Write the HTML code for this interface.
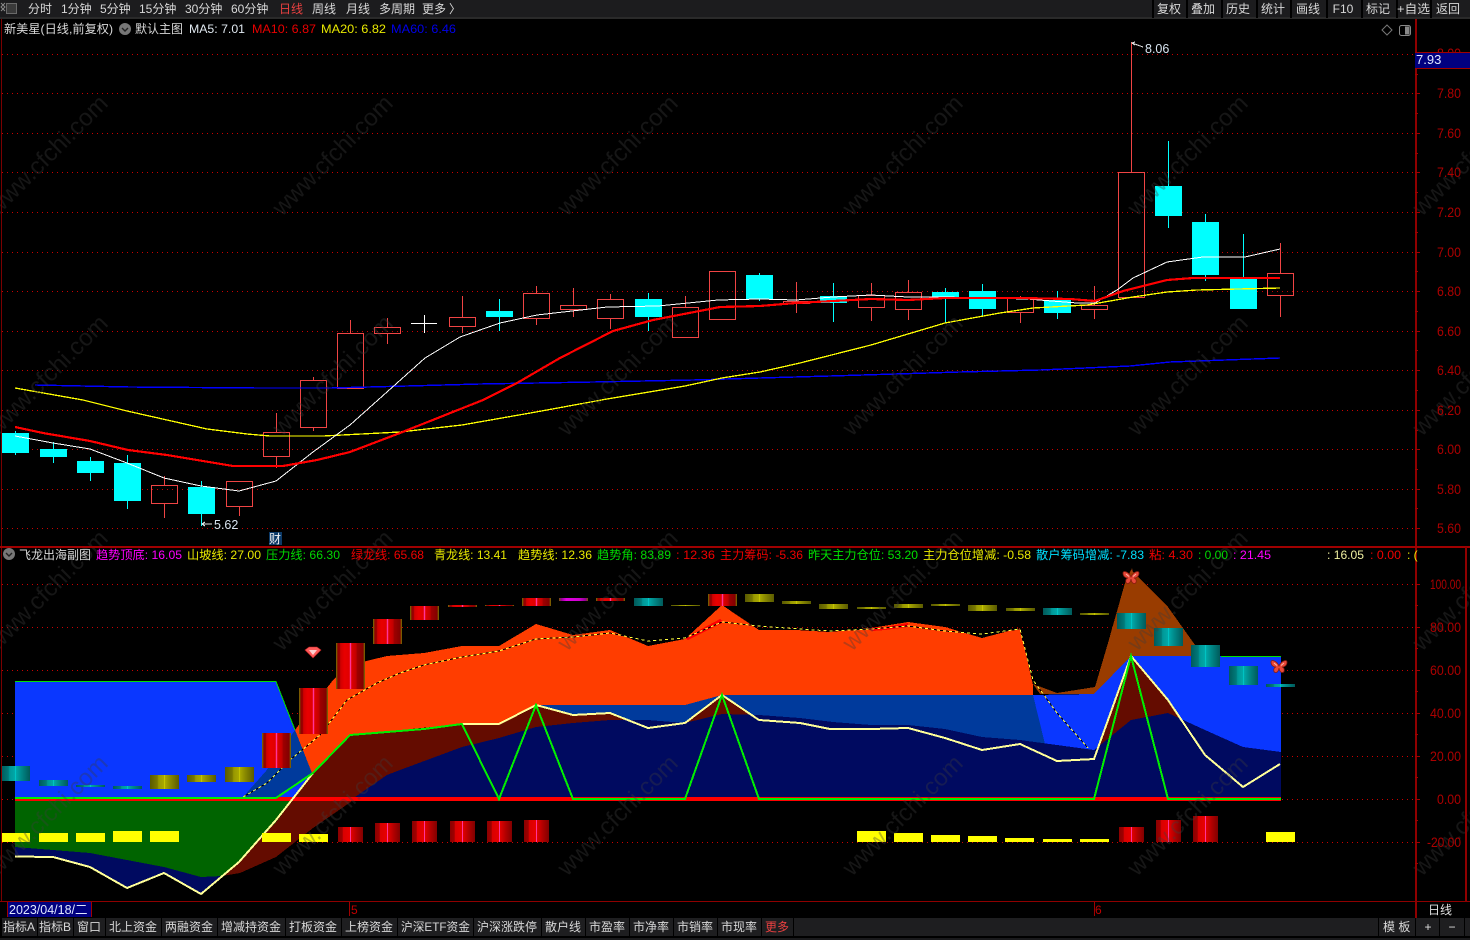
<!DOCTYPE html>
<html lang="zh-CN">
<head>
<meta charset="utf-8">
<title>新美星 日线</title>
<style>
html,body{margin:0;padding:0;background:#000;width:1470px;height:940px;overflow:hidden}
svg{display:block}
text{font-family:"Liberation Sans","Noto Sans CJK SC",sans-serif;font-size:12px;white-space:pre}
.t{fill:#d8d8d8}
.ax{fill:#ac0000;font-size:14px}
.wm{fill:rgba(60,60,60,.36);font-size:24px}
.c{text-anchor:middle}
</style>
</head>
<body>
<svg width="1470" height="940" viewBox="0 0 1470 940" xmlns="http://www.w3.org/2000/svg" shape-rendering="crispEdges">
<defs>
<linearGradient id="gr"><stop offset="0" stop-color="#7a5a00"/><stop offset=".04" stop-color="#7a5a00"/><stop offset=".05" stop-color="#8b0000"/><stop offset=".14" stop-color="#a00000"/><stop offset=".15" stop-color="#d00000"/><stop offset=".3" stop-color="#e80000"/><stop offset=".47" stop-color="#e00000"/><stop offset=".48" stop-color="#ff3399"/><stop offset=".52" stop-color="#ff3399"/><stop offset=".53" stop-color="#e00000"/><stop offset=".7" stop-color="#c00000"/><stop offset=".72" stop-color="#a00000"/><stop offset=".95" stop-color="#800000"/><stop offset=".96" stop-color="#7a5a00"/><stop offset="1" stop-color="#7a5a00"/></linearGradient>
<linearGradient id="gb"><stop offset="0" stop-color="#8b0000"/><stop offset=".18" stop-color="#a00000"/><stop offset=".2" stop-color="#d80000"/><stop offset=".47" stop-color="#e80000"/><stop offset=".48" stop-color="#ff3399"/><stop offset=".52" stop-color="#ff3399"/><stop offset=".53" stop-color="#e00000"/><stop offset=".75" stop-color="#b00000"/><stop offset="1" stop-color="#800000"/></linearGradient>
<linearGradient id="gt"><stop offset="0" stop-color="#005a5a"/><stop offset=".25" stop-color="#007a7a"/><stop offset=".3" stop-color="#009898"/><stop offset=".48" stop-color="#00a8a8"/><stop offset=".5" stop-color="#00d8d8"/><stop offset=".52" stop-color="#00a8a8"/><stop offset=".7" stop-color="#008888"/><stop offset="1" stop-color="#005a5a"/></linearGradient>
<linearGradient id="go"><stop offset="0" stop-color="#5a5a00"/><stop offset=".25" stop-color="#787800"/><stop offset=".3" stop-color="#989800"/><stop offset=".48" stop-color="#a8a800"/><stop offset=".5" stop-color="#d8d800"/><stop offset=".52" stop-color="#a8a800"/><stop offset=".7" stop-color="#888800"/><stop offset="1" stop-color="#5a5a00"/></linearGradient>
<linearGradient id="gm"><stop offset="0" stop-color="#7a5a00"/><stop offset=".08" stop-color="#900090"/><stop offset=".25" stop-color="#e000e0"/><stop offset=".7" stop-color="#d000d0"/><stop offset=".92" stop-color="#900090"/><stop offset="1" stop-color="#7a5a00"/></linearGradient>
</defs>

<rect width="1470" height="940" fill="#000"/>

<!-- top bar -->
<rect x="0" y="0" width="1470" height="18" fill="#1c1c1e"/>
<rect x="0" y="17" width="1470" height="2" fill="#2a2a2a"/>
<g fill="#000"><rect x="1152" y="0" width="2" height="18"/><rect x="1186" y="0" width="2" height="18"/><rect x="1221" y="0" width="2" height="18"/><rect x="1256" y="0" width="2" height="18"/><rect x="1290" y="0" width="2" height="18"/><rect x="1326" y="0" width="2" height="18"/><rect x="1361" y="0" width="2" height="18"/><rect x="1396" y="0" width="2" height="18"/><rect x="1430" y="0" width="2" height="18"/></g>
<path d="M1 3 L5 7 L1 11 M5 3 L1 7 L5 11" fill="none" stroke="#8a8a8a" stroke-width="1" shape-rendering="geometricPrecision"/>
<rect x="6.5" y="3.5" width="10" height="10" fill="#3a3a3a" stroke="#6a6a6a"/>
<g class="t">
<text x="28" y="13">分时</text><text x="61" y="13">1分钟</text><text x="100" y="13">5分钟</text><text x="139" y="13">15分钟</text><text x="185" y="13">30分钟</text><text x="231" y="13">60分钟</text>
<text x="279" y="13" style="fill:#e84040">日线</text><text x="312" y="13">周线</text><text x="346" y="13">月线</text><text x="379" y="13">多周期</text><text x="422" y="13">更多</text><text x="449" y="13">〉</text>
<text x="1169" y="13" class="c">复权</text><text x="1203" y="13" class="c">叠加</text><text x="1238" y="13" class="c">历史</text><text x="1273" y="13" class="c">统计</text><text x="1308" y="13" class="c">画线</text><text x="1343" y="13" class="c">F10</text><text x="1378" y="13" class="c">标记</text><text x="1397" y="13" textLength="33" lengthAdjust="spacingAndGlyphs">+自选</text><text x="1448" y="13" class="c">返回</text>
</g>

<!-- grid -->
<g stroke="#cc0000" stroke-width="1" stroke-dasharray="1 4" fill="none">
<path d="M2 54.5H1415M2 93.5H1415M2 133.5H1415M2 172.5H1415M2 212.5H1415M2 252.5H1415M2 291.5H1415M2 331.5H1415M2 370.5H1415M2 410.5H1415M2 449.5H1415M2 489.5H1415M2 528.5H1415"/>
<path d="M2 584.5H1415M2 627.5H1415M2 670.5H1415M2 713.5H1415M2 756.5H1415M2 799.5H1415M2 842.5H1415"/>
</g>

<!-- candles -->
<g fill="#00ffff" stroke="none">
<rect x="2" y="433" width="27" height="20"/><rect x="40" y="449" width="27" height="8"/><rect x="77" y="461" width="27" height="12"/><rect x="114" y="463" width="27" height="38"/><rect x="188" y="487" width="27" height="27"/><rect x="486" y="311" width="27" height="6"/><rect x="635" y="299" width="27" height="18"/><rect x="746" y="275" width="27" height="24"/><rect x="820" y="296" width="27" height="7"/><rect x="932" y="292" width="27" height="6"/><rect x="969" y="291" width="27" height="18"/><rect x="1044" y="300" width="27" height="13"/><rect x="1155" y="186" width="27" height="30"/><rect x="1192" y="222" width="27" height="53"/><rect x="1230" y="279" width="27" height="30"/>
</g>
<path fill="none" stroke="#00ffff" stroke-width="1" d="M15.5 431V455M53.5 442V463M90.5 457V481M127.5 455V509M201.5 481V526M499.5 299V331M648.5 293V331M759.5 273V301M833.5 283V322M945.5 288V323M982.5 284V316M1057.5 291V319M1168.5 141V228M1205.5 214V281M1243.5 234V309"/>
<path fill="none" stroke="#f04444" stroke-width="1" d="
M164.5 476V485.5M164.5 503.5V518M151.5 485.5H177.5V503.5H151.5Z
M239.5 506.5V516M226.5 481.5H252.5V506.5H226.5Z
M276.5 413V432.5M276.5 456.5V468M263.5 432.5H289.5V456.5H263.5Z
M313.5 377V380.5M313.5 427.5V431M300.5 380.5H326.5V427.5H300.5Z
M350.5 320V333.5M337.5 333.5H363.5V388.5H337.5Z
M387.5 318V327.5M387.5 333.5V344M374.5 327.5H400.5V333.5H374.5Z
M462.5 296V317.5M462.5 326.5V333M449.5 317.5H475.5V326.5H449.5Z
M536.5 286V293.5M536.5 318.5V325M523.5 293.5H549.5V318.5H523.5Z
M573.5 288V305.5M573.5 309.5V317M560.5 305.5H586.5V309.5H560.5Z
M610.5 294V299.5M610.5 318.5V329M597.5 299.5H623.5V318.5H597.5Z
M685.5 296V307.5M672.5 307.5H698.5V337.5H672.5Z
M709.5 271.5H735.5V319.5H709.5Z
M796.5 282V301.5M796.5 303.5V313M783.5 301.5H809.5V303.5H783.5Z
M871.5 283V295.5M871.5 307.5V321M858.5 295.5H884.5V307.5H858.5Z
M908.5 280V292.5M908.5 309.5V320M895.5 292.5H921.5V309.5H895.5Z
M1020.5 296V298.5M1020.5 312.5V323M1007.5 298.5H1033.5V312.5H1007.5Z
M1094.5 286V305.5M1094.5 309.5V319M1081.5 305.5H1107.5V309.5H1081.5Z
M1131.5 42V172.5M1118.5 172.5H1144.5V297.5H1118.5Z
M1280.5 243V273.5M1280.5 295.5V317M1267.5 273.5H1293.5V295.5H1267.5Z"/>
<path fill="none" stroke="#fff" stroke-width="1" d="M411 323.5H437M424.5 315V333"/>

<!-- MA lines -->
<polyline fill="none" stroke="#0000ff" stroke-width="1.4" points="35,385 130,387 260,388 330,388 407,386 480,384 593,382 693,380 760,378 830,376 960,372 1040,370 1130,366 1170,362 1280,358"/>
<polyline fill="none" stroke="#ffff00" stroke-width="1.3" points="15,388 83,400 127,411 167,420 207,429 247,434 270,436 323,436 400,432 462,425 536,412 607,399 685,386 722,378 760,372 800,363 871,345 945,323 1000,313 1033,308 1087,305 1133,297 1167,292 1197,290 1280,288"/>
<polyline fill="none" stroke="#fff" stroke-width="1" points="15,436 53,443 90,449 127,463 164,478 201,486 239,491 276,481 313,452 350,425 378,400 425,358 460,337 500,323 537,315 607,307 658,306 718,300 760,299 796,300 833,297 871,295 908,297 945,297 982,298 1027,299 1077,303 1095,303 1117,290 1133,278 1167,262 1203,257 1245,257 1280,249"/>
<polyline fill="none" stroke="#ff0000" stroke-width="2.2" points="15,427 43,433 90,441 128,450 167,455 233,466 283,466 317,460 350,452 400,433 483,400 517,383 560,358 613,331 653,320 720,307 760,306 796,303 833,301 871,299 908,300 945,298 982,298 1020,298 1070,299 1095,301 1123,291 1167,280 1193,278 1280,278"/>

<!-- price annotations -->
<path fill="none" stroke="#e0e0e0" stroke-width="1" d="M1143 47L1132 43M1135 42L1132 43L1135 45"/>
<text x="1145" y="53" style="fill:#d8e4f0;font-size:12.5px">8.06</text>
<path fill="none" stroke="#e0e0e0" stroke-width="1" d="M202 524H212M205 522L202 524L205 526"/>
<text x="214" y="529" style="fill:#d8e4f0;font-size:12.5px">5.62</text>
<rect x="269" y="532" width="13" height="13" fill="#0c3a68"/>
<text x="269" y="543" style="fill:#f0f0f0">财</text>

<!-- lower panel areas -->
<g>
<polygon fill="#0a37ff" points="15,682 276,682 295,730 313,775 313,799 15,799"/>
<polygon fill="#0a37ff" points="1033,695 1094,694 1131,656 1281,656 1281,799 1033,799"/>
<polygon fill="#993c00" points="1033,684 1057,693 1095,687 1108,643 1125,583 1131,570 1168,607 1195,645 1205,656 1131,656 1094,694 1040,694"/>
<polygon fill="#ff3d00" points="295,730 333,680 350,665 387,656 424,653 462,646 499,646 536,624 573,635 610,630 648,646 685,639 722,605 759,630 796,630 830,632 871,628 908,622 945,627 982,638 1020,628 1033,685 1033,695 722,695 685,705 536,705 499,724 462,724 350,735 312,773"/>
<polygon fill="#ff0000" points="685,638 720,619 724,622 688,640"/>
<polygon fill="#ff0000" points="868,628 885,627 908,623 908,627 885,630 872,631"/>
<polygon fill="#003a9c" points="243,797 266,771 295,730 312,773 277,797"/>
<polygon fill="#003a9c" points="536,705 685,705 722,695 1033,695 1045,744 1094,752 722,760 536,760"/>
<polygon fill="#640c00" points="222,876 239,862 276,820 313,773 350,735 387,732 424,729 462,724 499,724 536,705 573,715 610,713 648,728 685,723 722,695 759,720 800,723 830,729 871,729 908,728 945,738 982,750 1020,744 1057,761 1094,759 1131,656 1168,700 1205,755 1243,787 1280,764 1281,799 355,799 313,828 276,857 240,873"/>
<polygon fill="#000a60" points="355,797 387,775 400,770 462,747 499,738 536,727 573,723 610,720 648,720 685,723 722,714 759,715 800,718 833,722 871,725 908,725 945,729 982,737 1020,740 1057,745 1094,750 1131,720 1168,713 1205,730 1243,747 1281,752 1281,799 355,799"/>
<polygon fill="#006400" points="15,801 292,801 276,822 239,862 222,876 201,877 164,867 127,860 90,853 53,850 15,847"/>
<polygon fill="#000a60" points="15,847 53,850 90,853 127,860 164,867 201,877 222,876 201,894 164,873 127,888 90,867 53,857 15,856"/>
</g>

<!-- dashed line -->
<polyline fill="none" stroke="#000" stroke-width="1" points="243,797 267,783 290,760 320,735 347,700 377,683 400,673 424,665 462,657 499,651 536,639 573,637 610,633 648,641 685,638 722,622 759,626 800,629 830,631 871,629 908,626 945,631 982,634 1020,629 1033,680 1057,713 1088,748"/>
<polyline fill="none" stroke="#ffff40" stroke-width="1" stroke-dasharray="3 3" points="243,797 267,783 290,760 320,735 347,700 377,683 400,673 424,665 462,657 499,651 536,639 573,637 610,633 648,641 685,638 722,622 759,626 800,629 830,631 871,629 908,626 945,631 982,634 1020,629 1033,680 1057,713 1088,748"/>

<!-- thin green edges -->
<path fill="none" stroke="#00e000" stroke-width="1" d="M15 681.5H276L295 730M1221 656.5H1281"/>

<!-- zero, yellow, green lines -->
<rect x="15" y="797" width="1266" height="4" fill="#ff0000"/>
<polyline fill="none" stroke="#ffff99" stroke-width="2" points="15,856.5 53,857 90,867 127,888 164,873 201,894 239,862 276,820 313,773"/>
<polyline fill="none" stroke="#ffff99" stroke-width="2" points="462,724 499,724 536,705 573,715 610,713 648,728 685,723 722,695 759,720 800,723 830,729 871,729 908,728 945,738 982,750 1020,744 1057,761 1094,759 1131,656 1168,700 1205,755 1243,787 1280,764"/>
<polyline fill="none" stroke="#00ee00" stroke-width="2" points="15,798 276,798 313,773 350,735 387,732 424,729 462,724 499,799 536,705 573,799 685,799 722,695 759,799 1094,799 1131,656 1168,799 1281,799"/>

<!-- top row bars -->
<g>
<g fill="url(#gt)"><rect x="1" y="766" width="29" height="15"/><rect x="39" y="780" width="29" height="6"/><rect x="76" y="785" width="29" height="2"/><rect x="113" y="786" width="29" height="3"/><rect x="634" y="598" width="29" height="8"/><rect x="1043" y="608" width="29" height="7"/><rect x="1117" y="613" width="29" height="16"/><rect x="1154" y="628" width="29" height="18"/><rect x="1191" y="645" width="29" height="22"/><rect x="1229" y="666" width="29" height="19"/><rect x="1266" y="684" width="29" height="3"/></g>
<g fill="url(#go)"><rect x="150" y="775" width="29" height="14"/><rect x="187" y="775" width="29" height="7"/><rect x="225" y="767" width="29" height="15"/><rect x="671" y="605" width="29" height="1"/><rect x="745" y="594" width="29" height="8"/><rect x="782" y="601" width="29" height="3"/><rect x="819" y="604" width="29" height="5"/><rect x="857" y="607" width="29" height="2"/><rect x="894" y="604" width="29" height="4"/><rect x="931" y="604" width="29" height="2"/><rect x="968" y="605" width="29" height="6"/><rect x="1006" y="608" width="29" height="3"/><rect x="1080" y="613" width="29" height="2"/></g>
<g fill="url(#gr)"><rect x="262" y="733" width="29" height="35"/><rect x="299" y="688" width="29" height="46"/><rect x="336" y="643" width="29" height="46"/><rect x="373" y="619" width="29" height="25"/><rect x="410" y="606" width="29" height="14"/><rect x="448" y="605" width="29" height="2"/><rect x="485" y="605" width="29" height="1"/><rect x="522" y="598" width="29" height="8"/><rect x="596" y="598" width="29" height="3"/><rect x="708" y="594" width="29" height="12"/></g>
<rect x="559" y="598" width="29" height="3" fill="url(#gm)"/>

<!-- bottom row bars -->
<g fill="#ffff00"><rect x="1" y="833" width="29" height="9"/><rect x="39" y="833" width="29" height="9"/><rect x="76" y="833" width="29" height="9"/><rect x="113" y="831" width="29" height="11"/><rect x="150" y="831" width="29" height="11"/><rect x="262" y="833" width="29" height="9"/><rect x="299" y="834" width="29" height="8"/><rect x="857" y="831" width="29" height="11"/><rect x="894" y="833" width="29" height="9"/><rect x="931" y="835" width="29" height="7"/><rect x="968" y="836" width="29" height="6"/><rect x="1005" y="838" width="29" height="4"/><rect x="1043" y="839" width="29" height="3"/><rect x="1080" y="839" width="29" height="3"/><rect x="1266" y="832" width="29" height="10"/></g>
<g fill="url(#gb)"><rect x="338" y="827" width="25" height="15"/><rect x="375" y="823" width="25" height="19"/><rect x="412" y="821" width="25" height="21"/><rect x="450" y="821" width="25" height="21"/><rect x="487" y="821" width="25" height="21"/><rect x="524" y="820" width="25" height="22"/><rect x="1119" y="827" width="25" height="15"/><rect x="1156" y="820" width="25" height="22"/><rect x="1193" y="816" width="25" height="26"/></g>
</g>

<!-- gem -->
<g transform="translate(313,652)" shape-rendering="geometricPrecision">
<polygon points="-8,-2 -4,-5 4,-5 8,-2 0,6" fill="#ff5a5a" stroke="#c02020" stroke-width=".6"/>
<polygon points="-4,-2 4,-2 0,3" fill="#ffd0d0"/>
</g>
<!-- butterflies -->
<g transform="translate(1131,577)" shape-rendering="geometricPrecision">
<path d="M-.5 -4L1 -9L2 -4Z" fill="#a04010"/>
<path d="M0 0C-2 -5 -8 -7 -8 -4C-8 -1 -6 1 -3 1C-6 2 -6 6.500 -3 6.500C-1 6.500 0 3 0 2C0 3 1 6.500 3 6.500C6 6.500 6 2 3 1C6 1 8 -1 8 -4C8 -7 2 -5 0 0Z" fill="#e8483a" stroke="#8a1c10" stroke-width=".8"/>
<path d="M-5 -3L-2 -.5M5 -3L2 -.5" stroke="#ffb8a8" stroke-width="1" fill="none"/>
</g>
<g transform="translate(1279,666)" shape-rendering="geometricPrecision">
<path d="M0 0C-2 -5 -8 -7 -8 -4C-8 -1 -6 1 -3 1C-6 2 -6 6.500 -3 6.500C-1 6.500 0 3 0 2C0 3 1 6.500 3 6.500C6 6.500 6 2 3 1C6 1 8 -1 8 -4C8 -7 2 -5 0 0Z" fill="#e8483a" stroke="#8a1c10" stroke-width=".8"/>
<path d="M-5 -3L-2 -.5M5 -3L2 -.5" stroke="#ffb8a8" stroke-width="1" fill="none"/>
</g>

<!-- watermark -->
<g>
<text x="-3" y="217" transform="rotate(-45 -3 217)" class="wm">www.cfchi.com</text><text x="282" y="217" transform="rotate(-45 282 217)" class="wm">www.cfchi.com</text><text x="567" y="217" transform="rotate(-45 567 217)" class="wm">www.cfchi.com</text><text x="852" y="217" transform="rotate(-45 852 217)" class="wm">www.cfchi.com</text><text x="1137" y="217" transform="rotate(-45 1137 217)" class="wm">www.cfchi.com</text><text x="1422" y="217" transform="rotate(-45 1422 217)" class="wm">www.cfchi.com</text>
<text x="-3" y="437" transform="rotate(-45 -3 437)" class="wm">www.cfchi.com</text><text x="282" y="437" transform="rotate(-45 282 437)" class="wm">www.cfchi.com</text><text x="567" y="437" transform="rotate(-45 567 437)" class="wm">www.cfchi.com</text><text x="852" y="437" transform="rotate(-45 852 437)" class="wm">www.cfchi.com</text><text x="1137" y="437" transform="rotate(-45 1137 437)" class="wm">www.cfchi.com</text><text x="1422" y="437" transform="rotate(-45 1422 437)" class="wm">www.cfchi.com</text>
<text x="-3" y="652" transform="rotate(-45 -3 652)" class="wm">www.cfchi.com</text><text x="282" y="652" transform="rotate(-45 282 652)" class="wm">www.cfchi.com</text><text x="567" y="652" transform="rotate(-45 567 652)" class="wm">www.cfchi.com</text><text x="852" y="652" transform="rotate(-45 852 652)" class="wm">www.cfchi.com</text><text x="1137" y="652" transform="rotate(-45 1137 652)" class="wm">www.cfchi.com</text><text x="1422" y="652" transform="rotate(-45 1422 652)" class="wm">www.cfchi.com</text>
<text x="-3" y="877" transform="rotate(-45 -3 877)" class="wm">www.cfchi.com</text><text x="282" y="877" transform="rotate(-45 282 877)" class="wm">www.cfchi.com</text><text x="567" y="877" transform="rotate(-45 567 877)" class="wm">www.cfchi.com</text><text x="852" y="877" transform="rotate(-45 852 877)" class="wm">www.cfchi.com</text><text x="1137" y="877" transform="rotate(-45 1137 877)" class="wm">www.cfchi.com</text><text x="1422" y="877" transform="rotate(-45 1422 877)" class="wm">www.cfchi.com</text>
</g>

<!-- frame -->
<g>
<rect x="1" y="19" width="1" height="883" fill="#7a0000"/>
<rect x="1415" y="19" width="2" height="899" fill="#8f0000"/>
<rect x="0" y="546" width="1470" height="2" fill="#a00000"/>
<rect x="0" y="901" width="1470" height="1" fill="#8f0000"/>
<rect x="1465" y="547" width="2" height="354" fill="#8f0000"/>
</g>

<!-- ticks -->
<path fill="none" stroke="#a00000" stroke-width="1" d="M1415 54.5H1420M1415 74.5H1418M1415 93.5H1420M1415 113.5H1418M1415 133.5H1420M1415 153.5H1418M1415 172.5H1420M1415 192.5H1418M1415 212.5H1420M1415 232.5H1418M1415 252.5H1420M1415 271.5H1418M1415 291.5H1420M1415 311.5H1418M1415 331.5H1420M1415 350.5H1418M1415 370.5H1420M1415 390.5H1418M1415 410.5H1420M1415 430.5H1418M1415 449.5H1420M1415 469.5H1418M1415 489.5H1420M1415 508.5H1418M1415 528.5H1420M1415 584.5H1420M1415 605.5H1418M1415 627.5H1420M1415 648.5H1418M1415 670.5H1420M1415 691.5H1418M1415 713.5H1420M1415 734.5H1418M1415 756.5H1420M1415 777.5H1418M1415 799.5H1420M1415 820.5H1418M1415 842.5H1420M1415 863.5H1418"/>

<!-- axis labels -->
<g>
<text x="1437" y="58" class="ax" textLength="24" lengthAdjust="spacingAndGlyphs">8.00</text>
<text x="1437" y="98" class="ax" textLength="24" lengthAdjust="spacingAndGlyphs">7.80</text><text x="1437" y="138" class="ax" textLength="24" lengthAdjust="spacingAndGlyphs">7.60</text><text x="1437" y="177" class="ax" textLength="24" lengthAdjust="spacingAndGlyphs">7.40</text><text x="1437" y="217" class="ax" textLength="24" lengthAdjust="spacingAndGlyphs">7.20</text><text x="1437" y="257" class="ax" textLength="24" lengthAdjust="spacingAndGlyphs">7.00</text><text x="1437" y="296" class="ax" textLength="24" lengthAdjust="spacingAndGlyphs">6.80</text><text x="1437" y="336" class="ax" textLength="24" lengthAdjust="spacingAndGlyphs">6.60</text><text x="1437" y="375" class="ax" textLength="24" lengthAdjust="spacingAndGlyphs">6.40</text><text x="1437" y="415" class="ax" textLength="24" lengthAdjust="spacingAndGlyphs">6.20</text><text x="1437" y="454" class="ax" textLength="24" lengthAdjust="spacingAndGlyphs">6.00</text><text x="1437" y="494" class="ax" textLength="24" lengthAdjust="spacingAndGlyphs">5.80</text><text x="1437" y="533" class="ax" textLength="24" lengthAdjust="spacingAndGlyphs">5.60</text>
<text x="1430" y="589" class="ax" textLength="31" lengthAdjust="spacingAndGlyphs">100.00</text><text x="1430" y="632" class="ax" textLength="31" lengthAdjust="spacingAndGlyphs">80.00</text><text x="1430" y="675" class="ax" textLength="31" lengthAdjust="spacingAndGlyphs">60.00</text><text x="1430" y="718" class="ax" textLength="31" lengthAdjust="spacingAndGlyphs">40.00</text><text x="1430" y="761" class="ax" textLength="31" lengthAdjust="spacingAndGlyphs">20.00</text><text x="1437" y="804" class="ax" textLength="24" lengthAdjust="spacingAndGlyphs">0.00</text><text x="1427" y="847" class="ax" textLength="34" lengthAdjust="spacingAndGlyphs">-20.00</text>
</g>
<rect x="1415" y="52.500" width="55" height="16" fill="#000080"/>
<rect x="1415" y="52" width="55" height="1" fill="#a00000"/><rect x="1415" y="68" width="55" height="1" fill="#a00000"/>
<text x="1416" y="64" style="fill:#e0e8ff;font-size:13px">7.93</text>

<!-- header main -->
<text x="4" y="33" class="t" textLength="109" lengthAdjust="spacingAndGlyphs">新美星(日线,前复权)</text>
<circle cx="125" cy="29" r="6" fill="#777" shape-rendering="geometricPrecision"/><path d="M122 28L125 31L128 28" fill="none" stroke="#222" stroke-width="1.4" shape-rendering="geometricPrecision"/>
<text x="135" y="33" class="t">默认主图</text>
<text x="189" y="33" style="fill:#e0e8f0" textLength="56" lengthAdjust="spacingAndGlyphs">MA5: 7.01</text>
<text x="252" y="33" style="fill:#e80000" textLength="64" lengthAdjust="spacingAndGlyphs">MA10: 6.87</text>
<text x="321" y="33" style="fill:#e8e800" textLength="65" lengthAdjust="spacingAndGlyphs">MA20: 6.82</text>
<text x="391" y="33" style="fill:#0000e8" textLength="65" lengthAdjust="spacingAndGlyphs">MA60: 6.46</text>
<path d="M1387 25L1392 30L1387 35L1382 30Z" fill="none" stroke="#777" stroke-width="1" shape-rendering="geometricPrecision"/>
<rect x="1399.5" y="25.500" width="11" height="10" rx="2" fill="none" stroke="#888" shape-rendering="geometricPrecision"/><rect x="1405" y="26.500" width="4.500" height="8" fill="#888"/>

<!-- header lower -->
<circle cx="9" cy="554" r="6" fill="#777" shape-rendering="geometricPrecision"/><path d="M6 553L9 556L12 553" fill="none" stroke="#222" stroke-width="1.4" shape-rendering="geometricPrecision"/>
<text x="19" y="559" class="t">飞龙出海副图</text>
<text x="96" y="559" style="fill:#ff00ff" textLength="86" lengthAdjust="spacingAndGlyphs">趋势顶底: 16.05</text>
<text x="187" y="559" style="fill:#e8e800" textLength="74" lengthAdjust="spacingAndGlyphs">山坡线: 27.00</text>
<text x="266" y="559" style="fill:#00d800" textLength="74" lengthAdjust="spacingAndGlyphs">压力线: 66.30</text>
<text x="351" y="559" style="fill:#f00000" textLength="73" lengthAdjust="spacingAndGlyphs">绿龙线: 65.68</text>
<text x="434" y="559" style="fill:#e8e800" textLength="73" lengthAdjust="spacingAndGlyphs">青龙线: 13.41</text>
<text x="518" y="559" style="fill:#e8e800" textLength="74" lengthAdjust="spacingAndGlyphs">趋势线: 12.36</text>
<text x="597" y="559" style="fill:#00d800" textLength="74" lengthAdjust="spacingAndGlyphs">趋势角: 83.89</text>
<text x="676" y="559" style="fill:#f00000" textLength="39" lengthAdjust="spacingAndGlyphs">: 12.36</text>
<text x="720" y="559" style="fill:#f00000" textLength="83" lengthAdjust="spacingAndGlyphs">主力筹码: -5.36</text>
<text x="808" y="559" style="fill:#00e000" textLength="110" lengthAdjust="spacingAndGlyphs">昨天主力仓位: 53.20</text>
<text x="923" y="559" style="fill:#e8e800" textLength="108" lengthAdjust="spacingAndGlyphs">主力仓位增减: -0.58</text>
<text x="1036" y="559" style="fill:#00e0ff" textLength="108" lengthAdjust="spacingAndGlyphs">散户筹码增减: -7.83</text>
<text x="1149" y="559" style="fill:#f00000" textLength="44" lengthAdjust="spacingAndGlyphs">粘: 4.30</text>
<text x="1198" y="559" style="fill:#00d800" textLength="30" lengthAdjust="spacingAndGlyphs">: 0.00</text>
<text x="1233" y="559" style="fill:#ff00ff" textLength="38" lengthAdjust="spacingAndGlyphs">: 21.45</text>
<text x="1327" y="559" style="fill:#f0f0a0" textLength="37" lengthAdjust="spacingAndGlyphs">: 16.05</text>
<text x="1370" y="559" style="fill:#f00000" textLength="31" lengthAdjust="spacingAndGlyphs">: 0.00</text>
<text x="1407" y="559" style="fill:#e8e800">: (</text>

<!-- date axis -->
<rect x="8" y="902" width="84" height="15" fill="#000080"/>
<rect x="7" y="902" width="1" height="15" fill="#a00000"/><rect x="91" y="902" width="1" height="15" fill="#a00000"/>
<text x="9" y="914" style="fill:#e0e8ff;font-size:12.5px">2023/04/18/二</text>
<rect x="349" y="902" width="1" height="14" fill="#a00000"/><text x="351" y="914" style="fill:#c00000">5</text>
<rect x="1094" y="902" width="1" height="14" fill="#a00000"/><text x="1095" y="914" style="fill:#c00000">6</text>
<text x="1440" y="914" class="t c" style="fill:#e0e0e0">日线</text>

<!-- bottom tabs -->
<rect x="0" y="918" width="1470" height="19" fill="#1e1e20"/>
<rect x="0" y="936" width="1470" height="2" fill="#000"/>
<rect x="0" y="938" width="1470" height="2" fill="#1a1a1c"/>
<g fill="#000"><rect x="0" y="918" width="2" height="19"/><rect x="37" y="918" width="1" height="19"/><rect x="73" y="918" width="1" height="19"/><rect x="105" y="918" width="1" height="19"/><rect x="161" y="918" width="1" height="19"/><rect x="217" y="918" width="1" height="19"/><rect x="285" y="918" width="1" height="19"/><rect x="341" y="918" width="1" height="19"/><rect x="397" y="918" width="1" height="19"/><rect x="473" y="918" width="1" height="19"/><rect x="541" y="918" width="1" height="19"/><rect x="585" y="918" width="1" height="19"/><rect x="629" y="918" width="1" height="19"/><rect x="673" y="918" width="1" height="19"/><rect x="717" y="918" width="1" height="19"/><rect x="761" y="918" width="1" height="19"/><rect x="793" y="918" width="1" height="19"/><rect x="1378" y="918" width="1" height="19"/><rect x="1415" y="918" width="1" height="19"/><rect x="1439" y="918" width="1" height="19"/><rect x="1464" y="918" width="1" height="19"/></g>
<g class="t">
<text x="3" y="931">指标A</text><text x="39" y="931">指标B</text><text x="77" y="931">窗口</text><text x="109" y="931">北上资金</text><text x="165" y="931">两融资金</text><text x="221" y="931">增减持资金</text><text x="289" y="931">打板资金</text><text x="345" y="931">上榜资金</text><text x="401" y="931" textLength="69" lengthAdjust="spacingAndGlyphs">沪深ETF资金</text><text x="477" y="931">沪深涨跌停</text><text x="545" y="931">散户线</text><text x="589" y="931">市盈率</text><text x="633" y="931">市净率</text><text x="677" y="931">市销率</text><text x="721" y="931">市现率</text><text x="765" y="931" style="fill:#e84040">更多</text>
<text x="1383" y="931">模 板</text><text x="1428" y="931" class="c" style="fill:#e0e0e0">+</text><text x="1452" y="931" class="c" style="fill:#e0e0e0">−</text>
</g>
</svg>
</body>
</html>
